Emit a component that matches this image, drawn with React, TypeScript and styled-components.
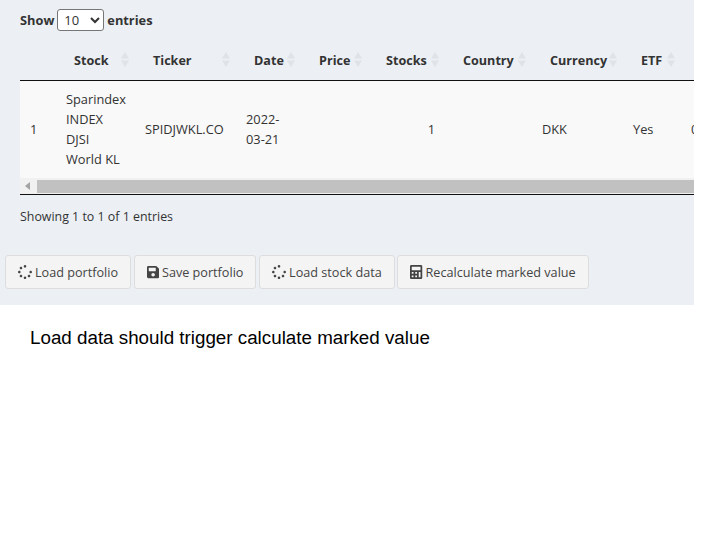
import React from "react";
import styled, { createGlobalStyle } from "styled-components";
import { FaCalculator, FaSave, FaSpinner } from "react-icons/fa";

const GlobalStyle = createGlobalStyle`
  html, body {
    margin: 0;
    padding: 0;
    background: #ffffff;
  }
`;

const COLUMNS = [
  { label: "", width: 36 },
  { label: "Stock", width: 79 },
  { label: "Ticker", width: 101 },
  { label: "Date", width: 65 },
  { label: "Price", width: 67 },
  { label: "Stocks", width: 77 },
  { label: "Country", width: 87 },
  { label: "Currency", width: 91 },
  { label: "ETF", width: 58 },
  { label: "", width: 60 },
];

const SortIcon = () => (
  <SortMark viewBox="0 0 8 15" aria-hidden="true">
    <path d="M4 0 L8 6.5 L0 6.5 Z" />
    <path d="M0 8.5 L8 8.5 L4 15 Z" />
  </SortMark>
);

const App = () => {
  return (
    <Page>
      <GlobalStyle />
      <Panel>
        <LengthControl>
          Show
          <LengthSelect defaultValue="10">
            <option value="10">10</option>
            <option value="25">25</option>
            <option value="50">50</option>
            <option value="100">100</option>
          </LengthSelect>
          entries
        </LengthControl>
        <TableArea>
          <DataTable>
            <colgroup>
              {COLUMNS.map((col, i) => (
                <col key={i} width={col.width} />
              ))}
            </colgroup>
            <thead>
              <tr>
                {COLUMNS.map((col, i) => (
                  <HeadCell key={i}>
                    {col.label}
                    {col.label && <SortIcon />}
                  </HeadCell>
                ))}
              </tr>
            </thead>
            <tbody>
              <tr>
                <BodyCell>1</BodyCell>
                <BodyCell>Sparindex INDEX DJSI World KL</BodyCell>
                <BodyCell>SPIDJWKL.CO</BodyCell>
                <BodyCell>2022-03-21</BodyCell>
                <BodyCell />
                <BodyCell $right>1</BodyCell>
                <BodyCell />
                <BodyCell>DKK</BodyCell>
                <BodyCell>Yes</BodyCell>
                <BodyCell>0</BodyCell>
              </tr>
            </tbody>
          </DataTable>
          <ScrollBar>
            <ScrollArrow />
            <ScrollThumb />
          </ScrollBar>
        </TableArea>
        <TableInfo>Showing 1 to 1 of 1 entries</TableInfo>
        <ButtonRow>
          <ActionButton>
            <FaSpinner />
            Load portfolio
          </ActionButton>
          <ActionButton>
            <NarrowIcon as={FaSave} />
            Save portfolio
          </ActionButton>
          <ActionButton>
            <FaSpinner />
            Load stock data
          </ActionButton>
          <ActionButton>
            <NarrowIcon as={FaCalculator} />
            Recalculate marked value
          </ActionButton>
        </ButtonRow>
      </Panel>
      <Note>Load data should trigger calculate marked value</Note>
    </Page>
  );
};

export default App;

const Page = styled.div`
  width: 702px;
  height: 549px;
  overflow: hidden;
  background: #ffffff;
`;

const Panel = styled.div`
  width: 694px;
  height: 305px;
  box-sizing: border-box;
  padding-top: 9px;
  overflow: hidden;

  background: #ecf0f5;
  color: #333333;
  font-family: "Open Sans", "Noto Sans", sans-serif;
  font-size: 12.8px;
`;

const LengthControl = styled.label`
  display: flex;
  align-items: center;
  gap: 3px;
  height: 22px;
  margin-left: 20px;

  font-weight: 700;
`;

const LengthSelect = styled.select`
  width: 47px;
  height: 22px;
  padding: 0 0 0 2px;

  background: #ffffff;
  border: 1px solid #767676;
  border-radius: 3px;
  color: #333333;

  font-family: inherit;
  font-size: 13px;
`;

const TableArea = styled.div`
  margin-top: 9px;
  margin-left: 20px;
  overflow: hidden;
  border-bottom: 1px solid #111111;
`;

const DataTable = styled.table`
  width: 721px;
  border-collapse: separate;
  border-spacing: 0;
  table-layout: fixed;
`;

const HeadCell = styled.th`
  position: relative;
  height: 41px;
  box-sizing: border-box;
  padding: 0 20px 0 18px;

  border-bottom: 1px solid #111111;

  font-weight: 700;
  font-size: 12.6px;
  text-align: left;
  white-space: nowrap;
`;

const SortMark = styled.svg`
  position: absolute;
  top: 12px;
  right: 6px;
  width: 8px;
  height: 15px;
  fill: #dfe2e6;
`;

const BodyCell = styled.td<{ $right?: boolean }>`
  height: 97px;
  box-sizing: border-box;
  padding: 7px 10px 9px;

  background: #f9f9f9;

  line-height: 20px;
  text-align: ${({ $right }) => ($right ? "right" : "left")};
`;

const ScrollBar = styled.div`
  display: flex;
  align-items: center;
  height: 16px;
  background: #f1f1f1;
`;

const ScrollArrow = styled.div`
  width: 0;
  height: 0;
  margin: 0 7px 0 5px;
  border-top: 4px solid transparent;
  border-bottom: 4px solid transparent;
  border-right: 5px solid #a3a3a3;
`;

const ScrollThumb = styled.div`
  flex: 1;
  height: 13px;
  background: #c1c1c1;
`;

const TableInfo = styled.div`
  margin-top: 13px;
  margin-left: 20px;

  font-size: 12.4px;
  line-height: 18px;
`;

const ButtonRow = styled.div`
  display: flex;
  gap: 2.6px;
  margin-top: 29px;
  margin-left: 5px;
`;

const ActionButton = styled.button`
  display: inline-flex;
  align-items: center;
  gap: 3px;
  height: 34px;
  box-sizing: border-box;
  padding: 0 12px;

  background: #f4f4f4;
  border: 1px solid #dddddd;
  border-radius: 3px;
  color: #444444;

  font-family: inherit;
  font-size: 12.65px;

  svg {
    width: 14px;
    height: 14px;
    flex-shrink: 0;
  }
`;

const NarrowIcon = styled.svg`
  && {
    width: 12.25px;
  }
`;

const Note = styled.p`
  margin: 22px 0 0 30px;
  color: #000000;
  font-family: "Liberation Sans", Arial, sans-serif;
  font-size: 18.8px;
  line-height: 22px;
`;
